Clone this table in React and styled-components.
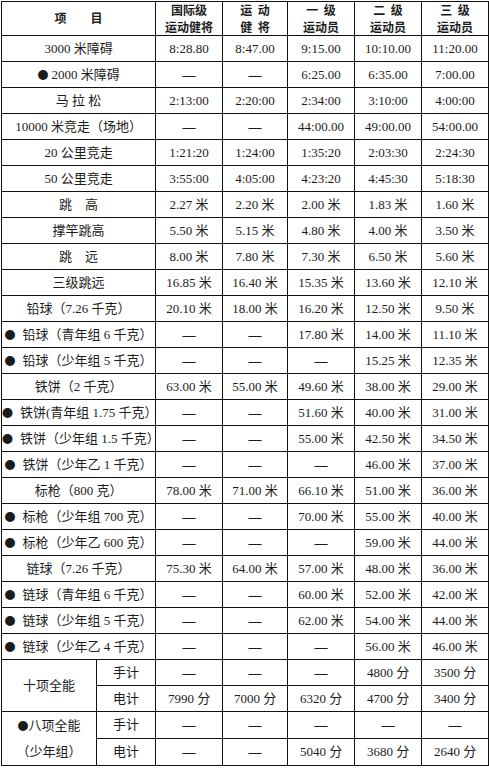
import styled, { createGlobalStyle } from 'styled-components';

const GlobalStyle = createGlobalStyle`
    html, body {
        margin: 0;
        padding: 0;
        background: #fff;
    }
`;

const DASH = '—';

// 项目, 国际级运动健将, 运动健将, 一级, 二级, 三级 (b = 名称前带 ●)
const rows = [
    ['3000 米障碍', '8:28.80', '8:47.00', '9:15.00', '10:10.00', '11:20.00'],
    ['b 2000 米障碍', DASH, DASH, '6:25.00', '6:35.00', '7:00.00'],
    ['马 拉 松', '2:13:00', '2:20:00', '2:34:00', '3:10:00', '4:00:00'],
    ['10000 米竞走（场地）', DASH, DASH, '44:00.00', '49:00.00', '54:00.00'],
    ['20 公里竞走', '1:21:20', '1:24:00', '1:35:20', '2:03:30', '2:24:30'],
    ['50 公里竞走', '3:55:00', '4:05:00', '4:23:20', '4:45:30', '5:18:30'],
    ['跳　高', '2.27 米', '2.20 米', '2.00 米', '1.83 米', '1.60 米'],
    ['撑竿跳高', '5.50 米', '5.15 米', '4.80 米', '4.00 米', '3.50 米'],
    ['跳　远', '8.00 米', '7.80 米', '7.30 米', '6.50 米', '5.60 米'],
    ['三级跳远', '16.85 米', '16.40 米', '15.35 米', '13.60 米', '12.10 米'],
    ['铅球（7.26 千克）', '20.10 米', '18.00 米', '16.20 米', '12.50 米', '9.50 米'],
    ['b 铅球（青年组 6 千克）', DASH, DASH, '17.80 米', '14.00 米', '11.10 米'],
    ['b 铅球（少年组 5 千克）', DASH, DASH, DASH, '15.25 米', '12.35 米'],
    ['铁饼（2 千克）', '63.00 米', '55.00 米', '49.60 米', '38.00 米', '29.00 米'],
    ['b 铁饼(青年组 1.75 千克）', DASH, DASH, '51.60 米', '40.00 米', '31.00 米'],
    ['b 铁饼（少年组 1.5 千克）', DASH, DASH, '55.00 米', '42.50 米', '34.50 米'],
    ['b 铁饼（少年乙 1 千克）', DASH, DASH, DASH, '46.00 米', '37.00 米'],
    ['标枪（800 克）', '78.00 米', '71.00 米', '66.10 米', '51.00 米', '36.00 米'],
    ['b 标枪（少年组 700 克）', DASH, DASH, '70.00 米', '55.00 米', '40.00 米'],
    ['b 标枪（少年乙 600 克）', DASH, DASH, DASH, '59.00 米', '44.00 米'],
    ['链球（7.26 千克）', '75.30 米', '64.00 米', '57.00 米', '48.00 米', '36.00 米'],
    ['b 链球（青年组 6 千克）', DASH, DASH, '60.00 米', '52.00 米', '42.00 米'],
    ['b 链球（少年组 5 千克）', DASH, DASH, '62.00 米', '54.00 米', '44.00 米'],
    ['b 链球（少年乙 4 千克）', DASH, DASH, DASH, '56.00 米', '46.00 米'],
];

const combined = [
    {
        name: '十项全能',
        lines: [
            ['手计', DASH, DASH, DASH, '4800 分', '3500 分'],
            ['电计', '7990 分', '7000 分', '6320 分', '4700 分', '3400 分'],
        ],
    },
    {
        name: '八项全能',
        bullet: true,
        sub: '（少年组）',
        lines: [
            ['手计', DASH, DASH, DASH, DASH, DASH],
            ['电计', DASH, DASH, '5040 分', '3680 分', '2640 分'],
        ],
    },
];

const headers = [
    ['国际级', '运动健将'],
    ['运  动', '健  将'],
    ['一  级', '运动员'],
    ['二  级', '运动员'],
    ['三  级', '运动员'],
];

const colWidths = [95, 59, 67, 65, 67, 67, 67];

const Page = styled.div`
    padding: 1px 0 0 1px;
`;

const Table = styled.table`
    border-collapse: collapse;
    table-layout: fixed;
    width: 487px;
    font-family: "Liberation Serif", "Noto Sans CJK SC", serif;
    font-size: 13px;
    color: #1c1c1c;
    border: 1.5px solid #111;
`;

const Col = styled.col`
    width: ${(p) => p.$w}px;
`;

const Row = styled.tr`
    height: ${(p) => (p.$head ? '34px' : '26.03px')};
`;

const HeadCell = styled.th`
    border: 1px solid #111;
    padding: ${(p) => (p.$wide ? '0 0 0 6px' : '0')};
    font-family: "Noto Sans CJK SC", sans-serif;
    font-weight: 700;
    font-size: 12px;
    line-height: 16.5px;
    text-align: center;
    vertical-align: middle;
    white-space: pre;
    letter-spacing: ${(p) => (p.$wide ? '6px' : '0')};
`;

const Cell = styled.td`
    border: 1px solid #111;
    padding: 0;
    text-align: center;
    vertical-align: middle;
    white-space: pre;
    line-height: ${(p) => (p.$tall ? '26px' : '16px')};
    font-weight: ${(p) => (p.$dash ? 700 : 400)};
`;

const Bullet = styled.span`
    font-family: "Noto Sans CJK SC", sans-serif;
    font-size: 11px;
    margin-right: ${(p) => p.$gap}px;
`;

const Name = ({ text }) => {
    if (!text.startsWith('b ')) return text;
    const label = text.slice(2);
    // 长名称的圆点离文字更远
    return (
        <>
            <Bullet $gap={label.length > 8 ? 7 : 3}>●</Bullet>
            {label}
        </>
    );
};

const Values = ({ vals }) =>
    vals.map((v, i) => (
        <Cell key={i} $dash={v === DASH}>
            {v}
        </Cell>
    ));

const App = () => (
    <Page>
        <GlobalStyle />
        <Table>
            <colgroup>
                {colWidths.map((w, i) => (
                    <Col key={i} $w={w} />
                ))}
            </colgroup>
            <thead>
                <Row $head>
                    <HeadCell colSpan={2} $wide>项　目</HeadCell>
                    {headers.map(([a, b]) => (
                        <HeadCell key={a + b}>
                            {a}
                            <br />
                            {b}
                        </HeadCell>
                    ))}
                </Row>
            </thead>
            <tbody>
                {rows.map(([name, ...vals]) => (
                    <Row key={name}>
                        <Cell colSpan={2}>
                            <Name text={name} />
                        </Cell>
                        <Values vals={vals} />
                    </Row>
                ))}
                {combined.map((group) =>
                    group.lines.map(([kind, ...vals], li) => (
                        <Row key={group.name + kind}>
                            {li === 0 && (
                                <Cell rowSpan={2} $tall>
                                    {group.bullet && <Bullet $gap={0}>●</Bullet>}
                                    {group.name}
                                    {group.sub && <br />}
                                    {group.sub}
                                </Cell>
                            )}
                            <Cell>{kind}</Cell>
                            <Values vals={vals} />
                        </Row>
                    ))
                )}
            </tbody>
        </Table>
    </Page>
);

export default App;
